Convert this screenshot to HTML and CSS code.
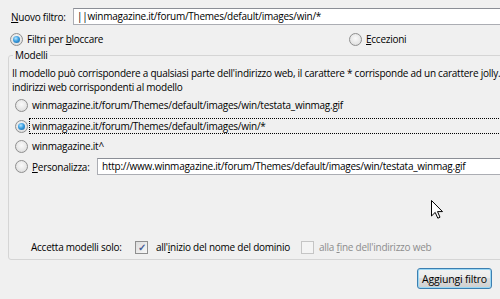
FILE: index.html
```html
<!DOCTYPE html>
<html lang="it">
<head>
    <meta charset="UTF-8">
    <meta name="viewport" content="width=device-width, initial-scale=1.0">
    <title>Nuovo filtro</title>
    <link rel="stylesheet" href="styles.css">
</head>
<body>

<div class="dialog">
    <div class="filter-row">
        <span class="label"><u>N</u>uovo filtro:</span>
        <div class="textbox">||winmagazine.it/forum/Themes/default/images/win/*</div>
    </div>

    <div class="kind-row">
        <span class="option blocking"><span class="radio checked"></span><span>Filtri per <u>b</u>loccare</span></span>
        <span class="option"><span class="radio"></span><span><u>E</u>ccezioni</span></span>
    </div>

    <fieldset class="group">
        <legend>Modelli</legend>
        <p class="hint">Il modello può corrispondere a qualsiasi parte dell'indirizzo web, il carattere * corrisponde ad un carattere jolly.<br>indirizzi web corrispondenti al modello</p>

        <div class="pattern"><span class="radio"></span><span class="pattern-text">winmagazine.it/forum/Themes/default/images/win/testata_winmag.gif</span></div>
        <div class="pattern selected"><span class="radio checked"></span><span class="pattern-text focus">winmagazine.it/forum/Themes/default/images/win/*</span></div>
        <div class="pattern"><span class="radio"></span><span class="pattern-text">winmagazine.it^</span></div>
        <div class="pattern custom"><span class="radio"></span><span class="pattern-text"><u>P</u>ersonalizza:</span>
            <div class="textbox">http://www.winmagazine.it/forum/Themes/default/images/win/testata_winmag.gif</div>
        </div>

        <div class="accept-row">
            <span class="accept-label">Accetta modelli solo:</span>
            <span class="check-option start"><span class="checkbox checked">&#10003;</span><span>all'<u>i</u>nizio del nome del dominio</span></span>
            <span class="check-option disabled"><span class="checkbox"></span><span>alla <u>f</u>ine dell'indirizzo web</span></span>
        </div>
    </fieldset>

    <div class="actions">
        <button class="btn">Aggiungi filtro</button>
    </div>

    <svg class="cursor" width="12" height="19" viewBox="0 0 12 19">
        <path d="M0.5 0.5 L0.5 16 L4.2 12.4 L6.8 18.2 L9 17.2 L6.5 11.6 L11.5 11.6 Z" fill="#fff" stroke="#000" stroke-width="1"/>
    </svg>
</div>

</body>
</html>
```

FILE: styles.css
```css
:root {
    --bg: #f0f0f0;
    --border: #abadb3;
    --group-border: #d5d5d5;
    --font-family: "Open Sans", "Noto Sans", sans-serif;
}
html, body {
    margin: 0;
    padding: 0;
    overflow: hidden;
}
body {
    font-family: var(--font-family);
    font-size: 10px;
    letter-spacing: -0.25px;
    background-color: var(--bg);
    color: #000;
    width: 500px;
    height: 299px;
    white-space: nowrap;
}
u {
    text-decoration: underline;
    text-underline-offset: 1px;
}
.dialog {
    position: relative;
    padding: 8px 0 0 0;
}
.filter-row {
    display: flex;
    align-items: center;
    height: 17px;
    padding-left: 11px;
}
.label {
    width: 62px;
    flex: none;
}
.textbox {
    flex: 1;
    height: 15px;
    line-height: 15px;
    border: 1px solid var(--border);
    border-top-color: #8b8e96;
    background-color: #fff;
    padding-left: 3px;
    margin-right: -20px;
    overflow: hidden;
}
.kind-row {
    display: flex;
    align-items: center;
    height: 14px;
    margin-top: 7px;
    padding-left: 10px;
}
.option {
    display: flex;
    align-items: center;
}
.option.blocking {
    width: 339px;
    flex: none;
}
.radio {
    width: 11px;
    height: 11px;
    border-radius: 50%;
    border: 1px solid #8f8f8f;
    background: radial-gradient(circle at 50% 40%, #fafafa 0%, #e6e6e6 60%, #d2d2d2 100%);
    margin-right: 4px;
    flex: none;
    position: relative;
}
.radio.checked::after {
    content: "";
    position: absolute;
    left: 2px;
    top: 2px;
    width: 7px;
    height: 7px;
    border-radius: 50%;
    background: radial-gradient(circle at 40% 35%, #b8e6ff 0%, #3a9ee0 45%, #1a5f9c 100%);
}
.group {
    margin: 2px -20px 0 8px;
    padding: 0 0 5px 3px;
    border: 1px solid var(--group-border);
    border-radius: 3px;
    min-width: 0;
}
.group legend {
    padding: 0 2px;
    margin-left: 1px;
    line-height: 14px;
}
.hint {
    margin: 4px 0 0 0;
    line-height: 14px;
}
.pattern {
    display: flex;
    align-items: center;
    height: 14px;
    margin-top: 4px;
    padding-left: 3px;
}
.pattern .radio {
    margin-right: 4px;
}
.pattern.selected {
    height: 16px;
    margin-top: 6px;
}
.pattern-text.focus {
    flex: 1;
    border: 1px dotted #000;
    padding: 0 0 0 2px;
    margin-left: -3px;
    line-height: 14px;
}
.pattern.selected + .pattern {
    margin-top: 5px;
}
.pattern.custom {
    height: 17px;
    margin-top: 5px;
}
.pattern.custom .pattern-text {
    width: 65px;
    flex: none;
}
.pattern.custom .textbox {
    padding-left: 4px;
}
.accept-row {
    display: flex;
    align-items: center;
    height: 14px;
    margin-top: 65px;
    padding-left: 19px;
}
.accept-label {
    width: 104px;
    flex: none;
}
.check-option {
    display: flex;
    align-items: center;
}
.check-option.start {
    width: 166px;
    flex: none;
}
.checkbox {
    width: 11px;
    height: 11px;
    border: 1px solid #8f8f8f;
    background: linear-gradient(135deg, #dcdcdc 0%, #f8f8f8 100%);
    margin-right: 8px;
    display: flex;
    align-items: center;
    justify-content: center;
    font-size: 10px;
    line-height: 1;
    color: #4a5f97;
    font-weight: bold;
    flex: none;
}
.check-option.disabled {
    color: #8d8d8d;
}
.check-option.disabled .checkbox {
    border-color: #c5c5c5;
    background: #f4f4f4;
    margin-right: 5px;
}
.actions {
    display: flex;
    justify-content: flex-end;
    padding: 8px 8px 0 0;
}
.btn {
    font-family: var(--font-family);
    font-size: 10.5px;
    letter-spacing: -0.2px;
    width: 75px;
    height: 21px;
    padding: 0;
    border: 1px solid #3c7fb1;
    border-radius: 3px;
    background: linear-gradient(#f2f2f2 0%, #ebebeb 45%, #dddddd 50%, #cfcfcf 100%);
    box-shadow: inset 0 0 0 1px #9ad7f4;
    color: #000;
}
.cursor {
    position: absolute;
    left: 431px;
    top: 200px;
}
```
